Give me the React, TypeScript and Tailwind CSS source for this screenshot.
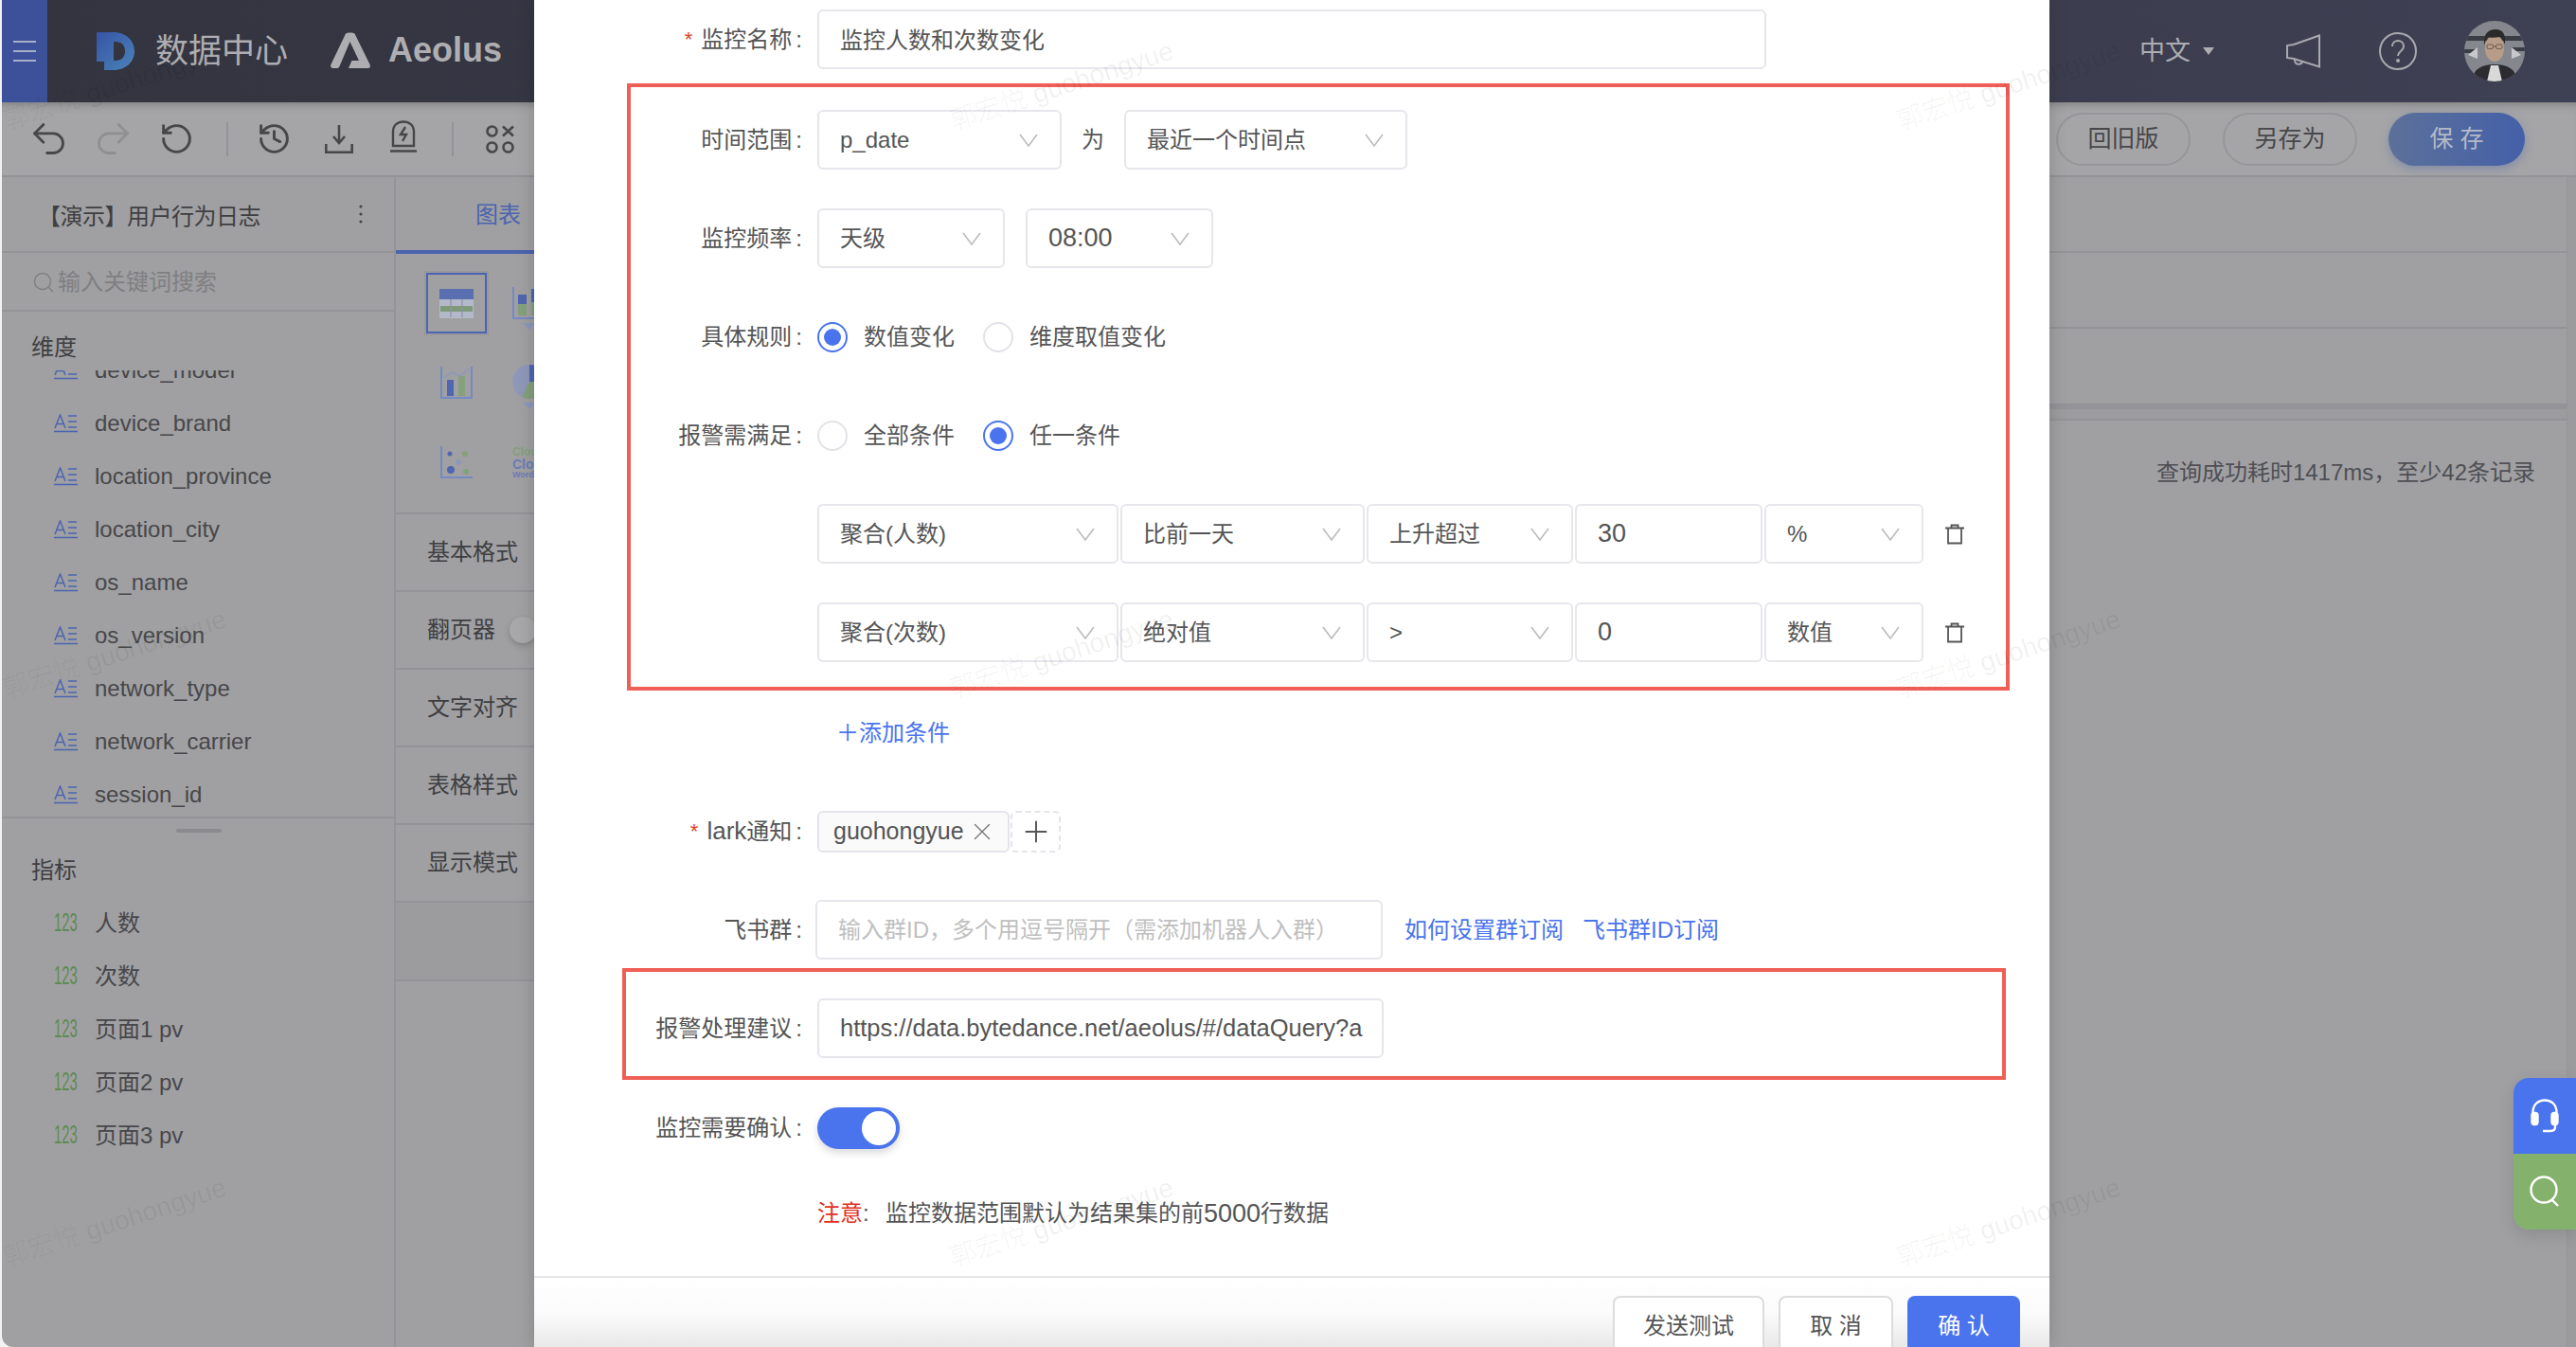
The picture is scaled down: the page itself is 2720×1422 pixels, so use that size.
import React from "react"
import { Undo2, Redo2, RotateCcw, History, Plus, X } from "lucide-react"

const dims = ["device_model", "device_brand", "location_province", "location_city", "os_name", "os_version", "network_type", "network_carrier", "session_id"]
const metrics = ["人数", "次数", "页面1 pv", "页面2 pv", "页面3 pv"]
const marks = [
  "left-[-2px] top-[70px]", "left-[998px] top-[70px]", "left-[1998px] top-[70px]",
  "left-[-2px] top-[670px]", "left-[998px] top-[670px]", "left-[1998px] top-[670px]",
  "left-[-2px] top-[1270px]", "left-[998px] top-[1270px]", "left-[1998px] top-[1270px]",
]

function Chevron() {
  return (
    <svg width="20" height="14" viewBox="0 0 20 14" fill="none" stroke="#bcbcbc" strokeWidth="1.6" className="shrink-0">
      <path d="M1 1l9 12 9-12" />
    </svg>
  )
}

function Select({ w, text }: { w: string; text: React.ReactNode }) {
  return (
    <div className={`${w} h-[63px] shrink-0 flex items-center justify-between pl-[22px] pr-[23px] border-2 border-[#e6e6ec] rounded-[6px] bg-white text-[#555]`}>
      <span className="whitespace-nowrap">{text}</span>
      <Chevron />
    </div>
  )
}

function Input({ w, text, muted }: { w: string; text: React.ReactNode; muted?: boolean }) {
  return (
    <div className={`${w} h-[63px] shrink-0 flex items-center pl-[22px] pr-[20px] border-2 border-[#e6e6ec] rounded-[6px] bg-white ${muted ? "text-[#bfbfbf]" : "text-[#555]"}`}>
      <div className="w-full overflow-hidden whitespace-nowrap">{text}</div>
    </div>
  )
}

function Label({ w, text, star }: { w: string; text: React.ReactNode; star?: boolean }) {
  return (
    <div className={`${w} shrink-0 mr-[16px] flex items-center justify-end text-[#555] whitespace-nowrap`}>
      {star && <span className="text-[#e0452a] mr-[9px] text-[22px]">*</span>}
      {text}
      <span className="ml-[4px]">:</span>
    </div>
  )
}

function Radio({ on, text }: { on?: boolean; text: string }) {
  return (
    <div className="flex items-center text-[#555] whitespace-nowrap">
      <span className={`w-[32px] h-[32px] rounded-full border-2 flex items-center justify-center ${on ? "border-[#4a74ee]" : "border-[#e2e2e8]"}`}>
        {on && <span className="w-[18px] h-[18px] rounded-full bg-[#4a74ee]" />}
      </span>
      <span className="ml-[17px]">{text}</span>
    </div>
  )
}

function Trash() {
  return (
    <svg width="22" height="22" viewBox="0 0 22 22" fill="none" stroke="#555" strokeWidth="1.8" className="ml-[20px] shrink-0">
      <path d="M1 4.500h20M7.500 4.500V1.500h7v3M4 4.500V20.500h14V4.500" />
    </svg>
  )
}

function RuleRow({ a, b, c, d, e }: { a: string; b: string; c: string; d: React.ReactNode; e: string }) {
  return (
    <div className="flex items-center h-[63px] pl-[197px] gap-[2px]">
      <Select w="w-[318px]" text={a} />
      <Select w="w-[258px]" text={b} />
      <Select w="w-[218px]" text={c} />
      <Input w="w-[198px]" text={d} />
      <Select w="w-[168px]" text={e} />
      <Trash />
    </div>
  )
}

function Avatar() {
  return (
    <svg width="64" height="64" viewBox="0 0 64 64" className="shrink-0 rounded-full">
      <rect width="64" height="64" fill="#85878f" />
      <path d="M0 16h64v5H0zM0 30h14v4H0zM50 28h14v4H50z" fill="#3b3d46" />
      <path d="M4 36l10-8v12zM60 36l-10-8v12z" fill="#c8c8cc" />
      <path d="M8 64c1-13 10-18 24-18s23 5 24 18z" fill="#2c2c30" />
      <path d="M24 64l4-17h8l4 17z" fill="#d9d9d9" />
      <ellipse cx="32" cy="29" rx="10" ry="14" fill="#b79d87" />
      <path d="M21 26c-1-12 4-17 12-17s11 5 10 16c-2-5-3-7-5-8-6 1-11 1-14 0-1 3-2 5-3 9z" fill="#2b2a2a" />
      <g fill="none" stroke="#4a4440" strokeWidth="0.7">
        <rect x="24" y="25" width="6.500" height="4.500" rx="1.500" />
        <rect x="33.500" y="25" width="6.500" height="4.500" rx="1.500" />
        <path d="M30.500 27h3" />
      </g>
    </svg>
  )
}

function Header() {
  return (
    <div className="h-[108px] shrink-0 flex items-center bg-linear-to-r from-[#33343f] to-[#3e4053] text-[#adadb2]">
      <div className="w-[48px] h-full bg-[#3c5199] flex flex-col items-center justify-center gap-[8px]">
        <span className="w-[24px] h-[2px] bg-[#a6aec8]" />
        <span className="w-[24px] h-[2px] bg-[#a6aec8]" />
        <span className="w-[24px] h-[2px] bg-[#a6aec8]" />
      </div>
      <svg width="40" height="40" viewBox="0 0 40 40" className="ml-[52px] shrink-0">
        <defs>
          <linearGradient id="dlogo" x1="0" y1="0" x2="1" y2="1">
            <stop offset="0" stopColor="#3654a6" />
            <stop offset="1" stopColor="#4a84b8" />
          </linearGradient>
        </defs>
        <path fillRule="evenodd" fill="url(#dlogo)" d="M0 0H18C31 0 40 9 40 20S31 40 18 40H8V31H0ZM18 10V30h1C27 30 30 26 30 20S27 10 19 10Z" />
      </svg>
      <span className="ml-[22px] text-[35px] whitespace-nowrap">数据中心</span>
      <svg width="42" height="38" viewBox="0 0 42 38" fill="#aeaeb2" className="ml-[45px] shrink-0 mb-[3px]">
        <path d="M16 1.500C17 0 24.500 0 25.500 1.500L41.500 34c1 2.500 0 4-2 4H19l3.500-8h7.500L20.500 10 9.500 36c-.6 1.400-1.500 2-3 2H2.500C.5 38-.5 36 .5 34Z" />
      </svg>
      <span className="ml-[19px] text-[36px] font-bold text-[#aeaeb2] mb-[2px]">Aeolus</span>
      <span className="ml-auto text-[27px]">中文</span>
      <svg width="12" height="8" viewBox="0 0 12 8" fill="#adadb2" className="ml-[13px]">
        <path d="M0 0h12L6 8z" />
      </svg>
      <svg width="36" height="36" viewBox="0 0 36 36" fill="none" stroke="#a9a9ae" strokeWidth="2" className="ml-[76px] shrink-0">
        <path d="M35 1.500V34.500L8 26 1 25V12L8 11ZM9 27c0 6 7 6 8 2" />
      </svg>
      <svg width="40" height="40" viewBox="0 0 40 40" fill="none" stroke="#a9a9ae" strokeWidth="2" className="ml-[62px] shrink-0">
        <circle cx="20" cy="20" r="19" />
        <path d="M14 15c0-4 3-6 6-6s6 2 6 6c0 5-6 5-6 10" />
        <circle cx="20" cy="30" r="1" fill="#a9a9ae" />
      </svg>
      <div className="ml-[50px] mr-[54px]">
        <Avatar />
      </div>
    </div>
  )
}

function Toolbar() {
  return (
    <div className="h-[79px] shrink-0 flex items-center border-b-2 border-[#939398] bg-[#a5a5a7] pl-[27px] pr-[54px] shadow-[inset_0_10px_10px_-8px_rgba(0,0,0,0.25)]">
      <Undo2 size={45} strokeWidth={1.5} className="text-[#47474a] shrink-0" />
      <Redo2 size={45} strokeWidth={1.5} className="ml-[23px] text-[#8f8f92] shrink-0" />
      <RotateCcw size={37} strokeWidth={1.9} className="ml-[26px] text-[#47474a] shrink-0" />
      <span className="ml-[34px] w-[2px] h-[36px] bg-[#939398]" />
      <History size={37} strokeWidth={1.9} className="ml-[30px] text-[#47474a] shrink-0" />
      <svg width="30" height="30" viewBox="0 0 30 30" fill="none" stroke="#47474a" strokeWidth="2.600" className="ml-[35px] shrink-0">
        <path d="M15 0v18M9 12l6 7 6-7M1.300 20v8.700h27.400V20" />
      </svg>
      <svg width="28" height="34" viewBox="0 0 28 34" fill="none" stroke="#47474a" strokeWidth="2.400" className="ml-[39px] shrink-0 mb-[6px]">
        <path d="M3 27V12C3 5 8 1.500 14 1.500S25 5 25 12v15ZM0 32.500h28" />
        <path d="M16 7l-5 8h6l-4 7" />
      </svg>
      <span className="ml-[37px] w-[2px] h-[36px] bg-[#939398]" />
      <svg width="30" height="30" viewBox="0 0 30 30" fill="none" stroke="#47474a" strokeWidth="2.600" className="ml-[34px] shrink-0">
        <circle cx="6.500" cy="6.500" r="5" />
        <circle cx="6.500" cy="23.500" r="5" />
        <circle cx="23.500" cy="23.500" r="5" />
        <path d="M18 1.500l11 10M29 1.500l-11 10" />
      </svg>
      <button className="ml-auto w-[142px] h-[56px] rounded-full border-2 border-[#96969a] text-[#47474a] text-[25px]">回旧版</button>
      <button className="ml-[34px] w-[142px] h-[56px] rounded-full border-2 border-[#96969a] text-[#47474a] text-[25px]">另存为</button>
      <button className="ml-[33px] w-[144px] h-[56px] rounded-full bg-linear-to-r from-[#5c7099] to-[#4460a8] text-[#b4b9c9] text-[25px] shadow-[0_4px_10px_rgba(69,96,168,0.35)]">保 存</button>
    </div>
  )
}

function FieldIcon() {
  return (
    <svg width="25" height="20" viewBox="0 0 25 20" fill="none" stroke="#4a64b0" strokeWidth="1.500" className="shrink-0">
      <path d="M1 15L6.500 1 12 15M3 10.500h7M15 2h9M15 8h9M15 14h9M0 18.500h25" />
    </svg>
  )
}

function FieldRow({ icon, text }: { icon: React.ReactNode; text: string }) {
  return (
    <div className="h-[56px] flex items-center pl-[55px] pt-[3px] text-[#47474a] whitespace-nowrap">
      <span className="w-[25px] shrink-0 flex items-center">{icon}</span>
      <span className="ml-[18px]">{text}</span>
    </div>
  )
}

function Sidebar() {
  return (
    <div className="w-[416px] shrink-0 border-r-2 border-[#939398] flex flex-col">
      <div className="h-[80px] shrink-0 flex items-center justify-between pl-[38px] pr-[33px] pt-[5px] border-b-2 border-[#939398] text-[#3f3f42] whitespace-nowrap">
        <span className="tracking-[-0.5px]">【演示】用户行为日志</span>
        <svg width="4" height="20" viewBox="0 0 4 20" fill="#47474a" className="-mt-[5px]">
          <circle cx="2" cy="2" r="1.600" />
          <circle cx="2" cy="10" r="1.600" />
          <circle cx="2" cy="18" r="1.600" />
        </svg>
      </div>
      <div className="h-[62px] shrink-0 flex items-center pl-[33px] pt-[1px] border-b-2 border-[#939398] text-[#7f7f82]">
        <svg width="22" height="22" viewBox="0 0 22 22" fill="none" stroke="#808083" strokeWidth="1.500" className="shrink-0">
          <circle cx="10" cy="10" r="8.500" />
          <path d="M16 16l5 5" />
        </svg>
        <span className="ml-[4px]">输入关键词搜索</span>
      </div>
      <div className="h-[62px] shrink-0 pt-[14px] pl-[31px] flex items-center text-[#3f3f42]">维度</div>
      <div className="h-[473px] shrink-0 overflow-hidden border-b-2 border-[#939398]">
        <div className="-mt-[30px]">
          {dims.map((d) => (
            <FieldRow key={d} icon={<FieldIcon />} text={d} />
          ))}
        </div>
      </div>
      <div className="mt-[11px] ml-[184px] w-[48px] h-[4px] rounded-full bg-[#8b8b8f]" />
      <div className="mt-[24px] mb-[10px] h-[32px] pl-[31px] flex items-center text-[#3f3f42]">指标</div>
      {metrics.map((m) => (
        <FieldRow key={m} icon={<span className="text-[27px] text-[#5f8a52] scale-x-[.55] origin-left inline-block leading-none">123</span>} text={m} />
      ))}
    </div>
  )
}

function ChartIcons() {
  return (
    <div className="grid grid-cols-[64px_64px] grid-rows-[64px_64px_64px] gap-x-[27px] gap-y-[20px] pl-[32px] pt-[20px] pb-[21px] border-b-2 border-[#939398]">
      <div className="w-[64px] h-[64px] border-2 border-[#4a64b0] outline-2 outline-[#98989c] flex items-center justify-center">
        <svg width="36" height="31" viewBox="0 0 36 31">
          <rect width="36" height="31" rx="1" fill="#b4b9c9" />
          <rect width="36" height="11" fill="#5a6fb0" />
          <rect x="1" y="18" width="34" height="6" fill="#7f9a78" />
          <path d="M12 11v19M24 11v19" stroke="#8c94ad" strokeWidth="1.200" />
        </svg>
      </div>
      <div className="flex flex-col items-start pt-[15px]">
        <svg width="36" height="34" viewBox="0 0 36 34" fill="none">
          <path d="M1 0v33h35" stroke="#7589c4" strokeWidth="2" />
          <rect x="6" y="8" width="9" height="10" fill="#4f66b0" />
          <rect x="6" y="18" width="9" height="12" fill="#84a07c" />
          <rect x="20" y="2" width="9" height="14" fill="#4f66b0" />
          <rect x="20" y="16" width="9" height="14" fill="#84a07c" />
        </svg>
        <svg width="14" height="7" viewBox="0 0 14 7" fill="#8d98bc" className="mt-[4px] ml-[11px]">
          <path d="M0 0h14L7 7z" />
        </svg>
      </div>
      <div className="flex items-center justify-center">
        <svg width="34" height="34" viewBox="0 0 34 34" fill="none">
          <path d="M1 0v33h32V0" stroke="#7589c4" strokeWidth="2" />
          <rect x="7" y="14" width="7" height="17" fill="#4f66b0" />
          <rect x="19" y="10" width="7" height="21" fill="#84a07c" />
          <path d="M4 12l8-6 9 4 9-8" stroke="#8d98bc" strokeWidth="1.600" />
        </svg>
      </div>
      <div className="flex flex-col items-start pt-[13px]">
        <svg width="36" height="36" viewBox="0 0 36 36">
          <circle cx="18" cy="18" r="18" fill="#8f98b8" />
          <path d="M18 18V0a18 18 0 0 1 18 18z" fill="#4f66b0" />
          <path d="M18 18h18a18 18 0 0 1-18 18 18 18 0 0 1-8-2z" fill="#84a07c" />
        </svg>
        <svg width="14" height="7" viewBox="0 0 14 7" fill="#8d98bc" className="mt-[4px] ml-[11px]">
          <path d="M0 0h14L7 7z" />
        </svg>
      </div>
      <div className="flex items-center justify-center">
        <svg width="34" height="34" viewBox="0 0 34 34" fill="none">
          <path d="M1 0v33h33" stroke="#7589c4" strokeWidth="2" />
          <circle cx="10" cy="8" r="2.500" fill="#4f66b0" />
          <circle cx="26" cy="8" r="3" fill="#84a07c" />
          <circle cx="19" cy="17" r="3" fill="#8d98bc" />
          <circle cx="11" cy="25" r="4" fill="#4f66b0" />
          <circle cx="27" cy="27" r="3" fill="#84a07c" />
        </svg>
      </div>
      <div className="flex flex-col justify-center leading-none whitespace-nowrap font-bold">
        <span className="text-[12px] text-[#84a07c]">Cloud Word</span>
        <span className="text-[14px] text-[#6a7db8]">Cloud</span>
        <span className="text-[9px] text-[#6a7db8]">Word Cloud</span>
      </div>
    </div>
  )
}

function ConfigPanel() {
  return (
    <div className="w-[240px] shrink-0 flex flex-col border-r-2 border-[#939398]">
      <div className="h-[81px] shrink-0 flex">
        <div className="w-[216px] h-[81px] flex items-center justify-center pt-[3px] border-b-4 border-[#4a64b0] text-[#4a64b0]">图表</div>
      </div>
      <ChartIcons />
      {["基本格式", "翻页器", "文字对齐", "表格样式", "显示模式"].map((t) => (
        <div key={t} className="h-[82px] shrink-0 flex items-center pl-[33px] border-b-2 border-[#939398] text-[#3f3f42] whitespace-nowrap">
          {t}
          {t === "翻页器" && <span className="ml-[15px] w-[28px] h-[28px] rounded-full bg-[#a8a8aa] shadow-[0_3px_6px_rgba(0,0,0,0.2)]" />}
        </div>
      ))}
      <div className="h-[83px] shrink-0 bg-[#9c9c9e] border-b-2 border-[#939398]" />
    </div>
  )
}

function ResultPanel() {
  return (
    <div className="flex-1 flex flex-col min-w-0">
      <div className="h-[80px] shrink-0 border-b-2 border-[#939398]" />
      <div className="h-[80px] shrink-0 border-b-2 border-[#939398]" />
      <div className="h-[85px] shrink-0 border-b-[6px] border-[#939398]" />
      <div className="h-[12px] shrink-0 border-b-2 border-[#939398] bg-[#9c9c9e]" />
      <div className="mt-[39px] h-[32px] flex items-center justify-end pr-[33px] text-[#4f4f55] whitespace-nowrap">查询成功耗时1417ms，至少42条记录</div>
    </div>
  )
}

function Modal() {
  return (
    <div className="absolute left-[564px] top-0 w-[1600px] h-[1422px] bg-white flex flex-col overflow-hidden shadow-[0_0_18px_rgba(0,0,0,0.18)]">
      <div className="flex-1 pt-[10px]">
        <div className="flex items-center">
          <Label w="w-[283px]" text="监控名称" star />
          <Input w="w-[1002px] pt-[2px]" text="监控人数和次数变化" />
        </div>

        <div className="ml-[98px] w-[1460px] mt-[15px] border-4 border-[#ef5f55] pt-[24px] pb-[26px] flex flex-col gap-[41px]">
          <div className="flex items-center h-[63px]">
            <Label w="w-[181px]" text="时间范围" />
            <Select w="w-[258px]" text="p_date" />
            <span className="w-[66px] text-center text-[#555]">为</span>
            <Select w="w-[299px]" text="最近一个时间点" />
          </div>
          <div className="flex items-center h-[63px]">
            <Label w="w-[181px]" text="监控频率" />
            <Select w="w-[198px]" text="天级" />
            <span className="w-[22px]" />
            <Select w="w-[198px]" text={<span className="text-[27px]">08:00</span>} />
          </div>
          <div className="flex items-center h-[63px]">
            <Label w="w-[181px]" text="具体规则" />
            <div className="flex items-center gap-[30px]">
              <Radio on text="数值变化" />
              <Radio text="维度取值变化" />
            </div>
          </div>
          <div className="flex items-center h-[63px]">
            <Label w="w-[181px]" text="报警需满足" />
            <div className="flex items-center gap-[30px]">
              <Radio text="全部条件" />
              <Radio on text="任一条件" />
            </div>
          </div>
          <RuleRow a="聚合(人数)" b="比前一天" c="上升超过" d={<span className="text-[27px]">30</span>} e="%" />
          <RuleRow a="聚合(次数)" b="绝对值" c=">" d={<span className="text-[27px]">0</span>} e="数值" />
        </div>

        <div className="mt-[13px] h-[63px] pl-[319px] flex items-center text-[#4a74ee]">＋添加条件</div>

        <div className="mt-[41px] h-[63px] flex items-center">
          <Label w="w-[283px]" text={<><span className="text-[26px]">lark</span>通知</>} star />
          <div className="h-[44px] w-[203px] flex items-center pl-[15px] border-2 border-[#e4e4ea] rounded-[6px] bg-[#fafafa] text-[#555] text-[25px]">
            guohongyue
            <X size={30} strokeWidth={1.1} className="ml-[4px] text-[#777] shrink-0" />
          </div>
          <div className="ml-[1px] h-[44px] w-[53px] flex items-center justify-center border-2 border-dashed border-[#e4e4ea] rounded-[6px] text-[#555]">
            <Plus size={36} strokeWidth={1.3} />
          </div>
        </div>

        <div className="mt-[41px] h-[63px] flex items-center">
          <Label w="w-[283px]" text="飞书群" />
          <Input w="w-[599px] -ml-[2px]" text="输入群ID，多个用逗号隔开（需添加机器人入群）" muted />
          <span className="ml-[23px] text-[#4a74ee] whitespace-nowrap">如何设置群订阅</span>
          <span className="ml-[20px] text-[#4a74ee] whitespace-nowrap">飞书群ID订阅</span>
        </div>

        <div className="ml-[93px] w-[1461px] mt-[9px] border-4 border-[#ef5f55] pt-[28px] pb-[19px]">
          <div className="flex items-center h-[63px]">
            <Label w="w-[186px]" text="报警处理建议" />
            <Input w="w-[598px]" text={<span className="text-[25.5px]">https://data.bytedance.net/aeolus/#/dataQuery?appId=1001</span>} />
          </div>
        </div>

        <div className="mt-[19px] h-[63px] flex items-center">
          <Label w="w-[283px]" text="监控需要确认" />
          <div className="w-[87px] h-[44px] rounded-full bg-[#4a74ee] flex items-center justify-end pr-[4px] shadow-[0_4px_8px_rgba(0,0,0,0.15)]">
            <span className="w-[36px] h-[36px] rounded-full bg-white" />
          </div>
        </div>

        <div className="mt-[43px] h-[32px] pl-[299px] flex items-center whitespace-nowrap text-[#555]">
          <span className="text-[#e0301e]">注意</span>
          <span className="w-[24px]">:</span>
          监控数据范围默认为结果集的前<span className="text-[27px]">5000</span>行数据
        </div>
      </div>

      <div className="h-[75px] shrink-0 border-t-2 border-[#e6e6e6] bg-linear-to-b from-white via-[#fbfbfb] to-[#e9e9e9] flex justify-end items-start gap-[15px] pt-[19px] pr-[31px]">
        <button className="w-[160px] h-[60px] shrink-0 pt-[3px] rounded-[8px] border-2 border-[#dcdcdc] bg-white text-[#555] text-[24px]">发送测试</button>
        <button className="w-[121px] h-[60px] shrink-0 pt-[3px] rounded-[8px] border-2 border-[#dcdcdc] bg-white text-[#555] text-[24px]">取 消</button>
        <button className="w-[119px] h-[60px] shrink-0 pt-[3px] rounded-[8px] bg-[#4a74ee] text-white text-[24px]">确 认</button>
      </div>
    </div>
  )
}

export default function App() {
  return (
    <div className="relative w-[2720px] h-[1422px] overflow-hidden bg-[#f2f2f2] text-[24px] [font-family:'Liberation_Sans','Noto_Sans_CJK_SC',sans-serif]">
      <div className="ml-[2px] h-full flex flex-col bg-[#a0a0a2] rounded-bl-[12px] overflow-hidden">
        <Header />
        <Toolbar />
        <div className="flex-1 flex min-h-0">
          <Sidebar />
          <ConfigPanel />
          <ResultPanel />
          <div className="w-[10px] shrink-0 bg-[#9b9b9d] border-l-2 border-[#98989b]" />
        </div>
      </div>

      <Modal />

      <div className="absolute right-0 top-[1138px] w-[66px] rounded-l-[16px] overflow-hidden shadow-[0_6px_18px_rgba(0,0,0,0.12)]">
        <div className="h-[80px] bg-[#4a74ee] flex items-center justify-center">
          <svg width="30" height="36" viewBox="0 0 30 36" fill="none" stroke="#fff" strokeWidth="2.400">
            <path d="M2.500 21V14C2.500 6 8 1.500 15 1.500S27.500 6 27.500 14v7" />
            <rect x="1.500" y="15" width="6" height="12" rx="2.500" fill="#fff" />
            <rect x="22.500" y="15" width="6" height="12" rx="2.500" fill="#fff" />
            <path d="M26 27v3c0 3-2 4-5 4h-8" />
          </svg>
        </div>
        <div className="h-[80px] bg-[#84b26d] flex items-center justify-center">
          <svg width="32" height="34" viewBox="0 0 32 34" fill="none" stroke="#fff" strokeWidth="2.400">
            <circle cx="15" cy="15" r="13.500" />
            <path d="M23 25l7 7" />
          </svg>
        </div>
      </div>

      <div className="absolute inset-0 pointer-events-none overflow-hidden">
        {marks.map((m) => (
          <span key={m} className={`absolute ${m} -rotate-[18deg] whitespace-nowrap text-[28px] font-light text-black/[0.06]`}>
            郭宏悦 guohongyue
          </span>
        ))}
      </div>
    </div>
  )
}
